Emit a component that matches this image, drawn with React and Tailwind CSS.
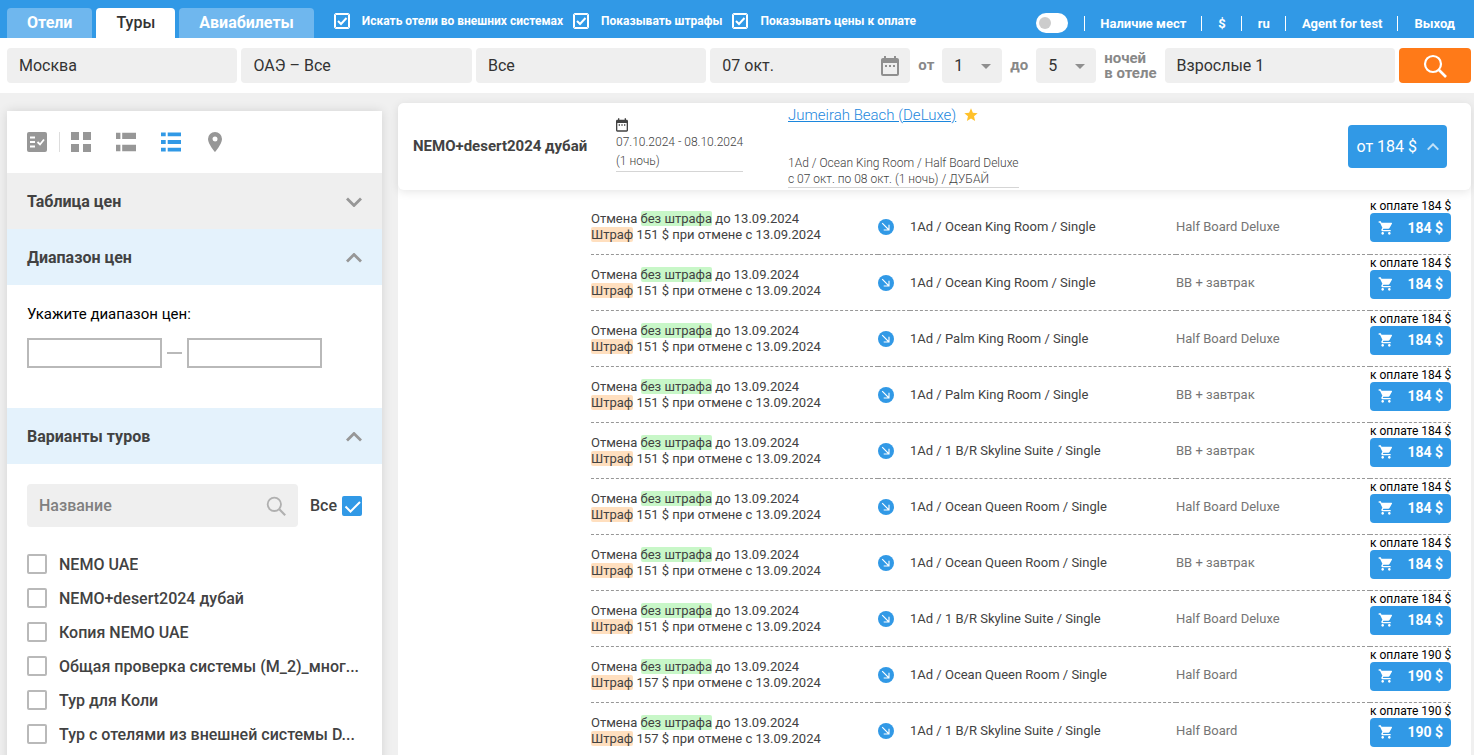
import React, { useState } from 'react';
import { MdArrowDropDown, MdDateRange, MdShoppingCart, MdStar } from 'react-icons/md';

const offers = [
    { room: '1Ad / Ocean King Room / Single', board: 'Half Board Deluxe', fine: 151, price: 184 },
    { room: '1Ad / Ocean King Room / Single', board: 'BB + завтрак', fine: 151, price: 184 },
    { room: '1Ad / Palm King Room / Single', board: 'Half Board Deluxe', fine: 151, price: 184 },
    { room: '1Ad / Palm King Room / Single', board: 'BB + завтрак', fine: 151, price: 184 },
    { room: '1Ad / 1 B/R Skyline Suite / Single', board: 'BB + завтрак', fine: 151, price: 184 },
    { room: '1Ad / Ocean Queen Room / Single', board: 'Half Board Deluxe', fine: 151, price: 184 },
    { room: '1Ad / Ocean Queen Room / Single', board: 'BB + завтрак', fine: 151, price: 184 },
    { room: '1Ad / 1 B/R Skyline Suite / Single', board: 'Half Board Deluxe', fine: 151, price: 184 },
    { room: '1Ad / Ocean Queen Room / Single', board: 'Half Board', fine: 157, price: 190 },
    { room: '1Ad / 1 B/R Skyline Suite / Single', board: 'Half Board', fine: 157, price: 190 },
];

const tours = [
    'NEMO UAE',
    'NEMO+desert2024 дубай',
    'Копия NEMO UAE',
    'Общая проверка системы (M_2)_мног...',
    'Тур для Коли',
    'Тур с отелями из внешней системы D...',
];

const SearchIcon = ({ className }) => (
    <svg viewBox="0 0 24 24" fill="none" stroke="currentColor" strokeWidth="2.2" className={className} aria-hidden="true">
        <circle cx="10" cy="10" r="8" />
        <path d="M16 16l7 7" strokeWidth="2.6" />
    </svg>
);

const Chevron = ({ up, className }) => (
    <svg viewBox="0 0 16 10" fill="none" stroke="currentColor" strokeWidth="2.8" className={className} aria-hidden="true">
        <path d={up ? 'M1 8.5l7-7 7 7' : 'M1 1.5l7 7 7-7'} />
    </svg>
);

const HeaderCheck = ({ label }) => (
    <label className="flex items-center text-xs font-bold text-white">
        <span className="mr-3 grid size-4">
            <input
                type="checkbox"
                defaultChecked
                className="peer col-start-1 row-start-1 size-4 appearance-none rounded-xs border border-white outline outline-white -outline-offset-2"
            />
            <svg viewBox="0 0 16 16" className="pointer-events-none invisible col-start-1 row-start-1 peer-checked:visible" aria-hidden="true">
                <path d="M4 8l3 3 5.5-6" fill="none" stroke="white" strokeWidth="2" />
            </svg>
        </span>
        {label}
    </label>
);

const Header = () => (
    <header className="flex h-[38px] items-end bg-[#3199e6] pl-[7px] pr-1 text-white">
        <nav className="flex gap-1 text-base font-bold">
            <a href="#hotels" className="flex h-[30px] items-center rounded-t-sm bg-[#6fb7ee] px-5">Отели</a>
            <a href="#tours" className="flex h-[30px] items-center rounded-t-sm bg-white px-5 font-medium text-[#333]">Туры</a>
            <a href="#avia" className="flex h-[30px] items-center rounded-t-sm bg-[#6fb7ee] px-5">Авиабилеты</a>
        </nav>
        <div className="ml-5 flex h-[34px] items-center gap-[10px]">
            <HeaderCheck label="Искать отели во внешних системах" />
            <HeaderCheck label="Показывать штрафы" />
            <HeaderCheck label="Показывать цены к оплате" />
        </div>
        <div className="ml-auto flex h-[30px] items-center text-[13px] font-bold leading-[15px]">
            <span className="mr-4 grid h-5 w-8 items-center">
                <input
                    id="availability"
                    type="checkbox"
                    role="switch"
                    className="peer col-start-1 row-start-1 h-5 w-8 appearance-none rounded-full bg-white"
                />
                <span className="pointer-events-none col-start-1 row-start-1 ml-[3px] size-3 rounded-full bg-[#ccc] peer-checked:ml-4" />
            </span>
            <label htmlFor="availability" className="border-l border-white pl-[15px] pr-[15px]">Наличие мест</label>
            <a href="#currency" className="border-l border-white pl-4 pr-[15px]">$</a>
            <a href="#lang" className="border-l border-white pl-4 pr-[15px]">ru</a>
            <a href="#agent" className="border-l border-white pl-4 pr-[15px]">Agent for test</a>
            <a href="#logout" className="border-l border-white pl-4 pr-[15px]">Выход</a>
        </div>
    </header>
);

const Field = ({ label, value }) => (
    <input
        aria-label={label}
        defaultValue={value}
        className="h-[35px] min-w-0 flex-1 rounded-sm bg-[#efefef] px-3 text-base text-[#333] outline-none"
    />
);

const NightsSelect = ({ label, value }) => (
    <span className="grid w-[60px] items-center">
        <select
            aria-label={label}
            defaultValue={value}
            className="col-start-1 row-start-1 h-[35px] appearance-none rounded-sm bg-[#efefef] pl-3 text-base font-normal text-[#333]"
        >
            {[1, 2, 3, 4, 5, 6, 7].map((n) => <option key={n}>{n}</option>)}
        </select>
        <MdArrowDropDown size={24} className="pointer-events-none col-start-1 row-start-1 mr-1 justify-self-end text-[#8f8f8f]" />
    </span>
);

const SearchBar = () => (
    <form className="flex items-center gap-1 bg-white py-[10px] pl-[7px] pr-[3px]">
        <Field label="Город вылета" value="Москва" />
        <Field label="Направление" value="ОАЭ – Все" />
        <Field label="Тур" value="Все" />
        <span className="flex h-[35px] w-[200px] items-center rounded-sm bg-[#efefef] pr-2">
            <input aria-label="Дата" defaultValue="07 окт." className="min-w-0 flex-1 px-3 text-base text-[#333] outline-none" />
            <MdDateRange size={24} className="text-[#8f8f8f]" />
        </span>
        <div className="flex items-center gap-2 px-1 text-[15px] font-bold text-[#888]">
            от
            <NightsSelect label="Ночей от" value={1} />
            до
            <NightsSelect label="Ночей до" value={5} />
            <span className="leading-[15px]">ночей<br />в отеле</span>
        </div>
        <Field label="Туристы" value="Взрослые 1" />
        <button type="button" aria-label="Найти" className="flex h-[35px] w-[72px] items-center justify-center rounded-sm bg-[#ff7a18] text-white">
            <SearchIcon className="size-6" />
        </button>
    </form>
);

const ViewSwitcher = () => (
    <div className="flex h-[62px] items-center px-5 text-[#979797]">
        <button type="button" aria-label="Выбранное">
            <svg viewBox="0 0 20 20" className="size-5" aria-hidden="true">
                <rect width="20" height="20" rx="2" fill="currentColor" />
                <path d="M3 5.5h5M3 10h5M3 14.5h5M10.5 10l2.5 2.5 4-5" fill="none" stroke="white" strokeWidth="1.8" />
            </svg>
        </button>
        <span className="ml-3 mr-[11px] h-5 w-px bg-[#ddd]" />
        <div className="flex gap-[25px]">
            <button type="button" aria-label="Плитка">
                <svg viewBox="0 0 20 20" fill="currentColor" className="size-5" aria-hidden="true">
                    <path d="M0 0h8v8H0zM12 0h8v8h-8zM0 12h8v8H0zM12 12h8v8h-8z" />
                </svg>
            </button>
            <button type="button" aria-label="Крупный список">
                <svg viewBox="0 0 20 20" fill="currentColor" className="size-5" aria-hidden="true">
                    <path d="M0 .7h4.4v6.4H0zM6.2.7H20v6.4H6.2zM0 12.8h4.4v6.4H0zM6.2 12.8H20v6.4H6.2z" />
                </svg>
            </button>
            <button type="button" aria-label="Список" className="text-[#3199e6]">
                <svg viewBox="0 0 20 20" fill="currentColor" className="size-5" aria-hidden="true">
                    <path d="M0 .6h4.7v3.7H0zM6.7.6H20v3.7H6.7zM0 8.1h4.7v3.8H0zM6.7 8.1H20v3.8H6.7zM0 15.7h4.7v3.7H0zM6.7 15.7H20v3.7H6.7z" />
                </svg>
            </button>
            <button type="button" aria-label="Карта">
                <svg viewBox="0 0 20 20" fill="currentColor" className="size-5" aria-hidden="true">
                    <path fillRule="evenodd" d="M9 0a7 7 0 0 0-7 7c0 5 7 13 7 13s7-8 7-13a7 7 0 0 0-7-7zm0 4.500a2.500 2.500 0 1 1 0 5 2.500 2.500 0 0 1 0-5z" />
                </svg>
            </button>
        </div>
    </div>
);

const SectionTitle = ({ title, open, onClick }) => (
    <button
        type="button"
        onClick={onClick}
        aria-expanded={open}
        className={`flex h-14 w-full items-center justify-between px-5 pt-0.5 text-base font-bold text-[#424242] ${open ? 'bg-[#e4f2fc]' : 'bg-[#efefef]'}`}
    >
        {title}
        <Chevron up={open} className="h-[10px] w-4 text-[#979797]" />
    </button>
);

const Sidebar = () => {
    const [tableOpen, setTableOpen] = useState(false);
    const [rangeOpen, setRangeOpen] = useState(true);
    const [toursOpen, setToursOpen] = useState(true);

    return (
        <aside className="mt-2 w-[375px] shrink-0 bg-white shadow-[0_0_10px_rgba(0,0,0,0.12)]">
            <ViewSwitcher />
            <SectionTitle title="Таблица цен" open={tableOpen} onClick={() => setTableOpen(!tableOpen)} />
            <SectionTitle title="Диапазон цен" open={rangeOpen} onClick={() => setRangeOpen(!rangeOpen)} />
            {rangeOpen && (
                <div className="px-5 pb-10 pt-5">
                    <p className="text-[15px] leading-[18px] text-black">Укажите диапазон цен:</p>
                    <div className="mt-[15px] flex items-center gap-[5px]">
                        <input aria-label="Цена от" className="h-[30px] w-[135px] border-2 border-[#b9b9b9] px-2" />
                        <span className="h-0.5 w-[15px] bg-[#b9b9b9]" />
                        <input aria-label="Цена до" className="h-[30px] w-[135px] border-2 border-[#b9b9b9] px-2" />
                    </div>
                </div>
            )}
            <SectionTitle title="Варианты туров" open={toursOpen} onClick={() => setToursOpen(!toursOpen)} />
            {toursOpen && (
                <div className="px-5 py-5 text-base font-medium text-[#424242]">
                    <div className="flex items-center gap-3">
                        <span className="flex h-[43px] flex-1 items-center rounded-sm bg-[#efefef] px-3">
                            <input aria-label="Название" placeholder="Название" className="min-w-0 flex-1 outline-none placeholder:text-[#808080]" />
                            <SearchIcon className="size-5 text-[#b0b0b0]" />
                        </span>
                        <label className="flex items-center gap-[5px]">
                            Все
                            <span className="grid size-5">
                                <input
                                    type="checkbox"
                                    defaultChecked
                                    className="peer col-start-1 row-start-1 size-5 appearance-none rounded-xs border-2 border-[#b9b9b9] checked:border-[#3199e6] checked:bg-[#3199e6]"
                                />
                                <svg viewBox="0 0 20 20" className="pointer-events-none invisible col-start-1 row-start-1 peer-checked:visible" aria-hidden="true">
                                    <path d="M3.500 10.500l5 5L18 6" fill="none" stroke="white" strokeWidth="2" />
                                </svg>
                            </span>
                        </label>
                    </div>
                    <ul className="mt-5">
                        {tours.map((tour) => (
                            <li key={tour}>
                                <label className="flex h-[34px] items-center gap-3">
                                    <input type="checkbox" className="size-5 shrink-0 appearance-none rounded-xs border-2 border-[#b9b9b9] checked:bg-[#3199e6]" />
                                    <span className="truncate pt-0.5">{tour}</span>
                                </label>
                            </li>
                        ))}
                    </ul>
                </div>
            )}
        </aside>
    );
};

const HotelCard = () => (
    <div className="relative flex h-[87px] items-center rounded-md bg-white pl-[15px] pr-6 text-[#424242] shadow-[0_2px_10px_rgba(0,0,0,0.1)]">
        <h2 className="w-[203px] text-[15px] font-bold">NEMO+desert2024 дубай</h2>
        <div className="w-[172px] pb-1 text-xs font-light leading-[19px]">
            <MdDateRange size={16} className="-ml-0.5" />
            <p className="inline-block border-b border-[#d5d5d5] align-top">07.10.2024 - 08.10.2024<br />(1 ночь)</p>
        </div>
        <div className="flex-1 font-light">
            <div className="flex items-center gap-[7px]">
                <a href="#hotel" className="text-[15px] leading-5 text-[#1c87dd] underline">Jumeirah Beach (DeLuxe)</a>
                <MdStar size={16} className="text-[#ffc12b]" />
            </div>
            <p className="mt-[30px] inline-block border-b border-[#d5d5d5] align-top text-xs leading-4">
                1Ad / Ocean King Room / Half Board Deluxe<br />
                с 07 окт. по 08 окт. (1 ночь) / ДУБАЙ
            </p>
        </div>
        <button type="button" className="flex h-[43px] items-center gap-[10px] rounded-sm bg-[#3199e6] px-2 text-base text-white">
            от 184 $
            <Chevron up className="h-2 w-3 opacity-70" />
        </button>
    </div>
);

const OfferRow = ({ offer }) => (
    <tr className="h-14 border-b border-dashed border-[#979797]">
        <td className="w-[287px] pt-0.5 leading-4">
            Отмена <span className="rounded-xs bg-[#c8f7c8]">без штрафа</span> до 13.09.2024<br />
            <span className="rounded-xs bg-[#ffdfbf]">Штраф</span> {offer.fine} $ при отмене с 13.09.2024
        </td>
        <td className="w-8 pt-0.5">
            <svg viewBox="0 0 16 16" className="size-4" aria-hidden="true">
                <circle cx="8" cy="8" r="8" fill="#3199e6" />
                <path d="M4.200 4.200l6.800 6.800M11 5.700V11H5.700" fill="none" stroke="white" strokeWidth="1.100" />
            </svg>
        </td>
        <td className="w-[266px] pt-0.5">{offer.room}</td>
        <td className="pt-0.5 text-[#757575]">{offer.board}</td>
        <td className="w-[81px] pb-[10px]">
            <div className="whitespace-nowrap text-right text-xs leading-[14px] text-black">к оплате {offer.price} $</div>
            <button type="button" className="flex h-[29px] w-full items-center justify-between rounded-sm bg-[#3199e6] px-2 text-sm font-bold text-white">
                <MdShoppingCart size={16} />
                {offer.price} $
            </button>
        </td>
    </tr>
);

const App = () => {
    return (
        <div className="min-h-screen bg-[#f0f0f0] font-['Roboto',sans-serif]">
            <Header />
            <SearchBar />
            <main className="flex gap-4 pl-[7px] pr-[3px] pt-[10px]">
                <Sidebar />
                <section className="min-w-0 flex-1 rounded-t-md bg-white">
                    <HotelCard />
                    <div className="pl-[193px] pr-5 pt-2">
                        <table className="w-full table-fixed border-collapse text-[13px] text-[#424242]">
                            <tbody>
                                {offers.map((offer, i) => <OfferRow key={i} offer={offer} />)}
                            </tbody>
                        </table>
                    </div>
                </section>
            </main>
        </div>
    );
};

export default App;
